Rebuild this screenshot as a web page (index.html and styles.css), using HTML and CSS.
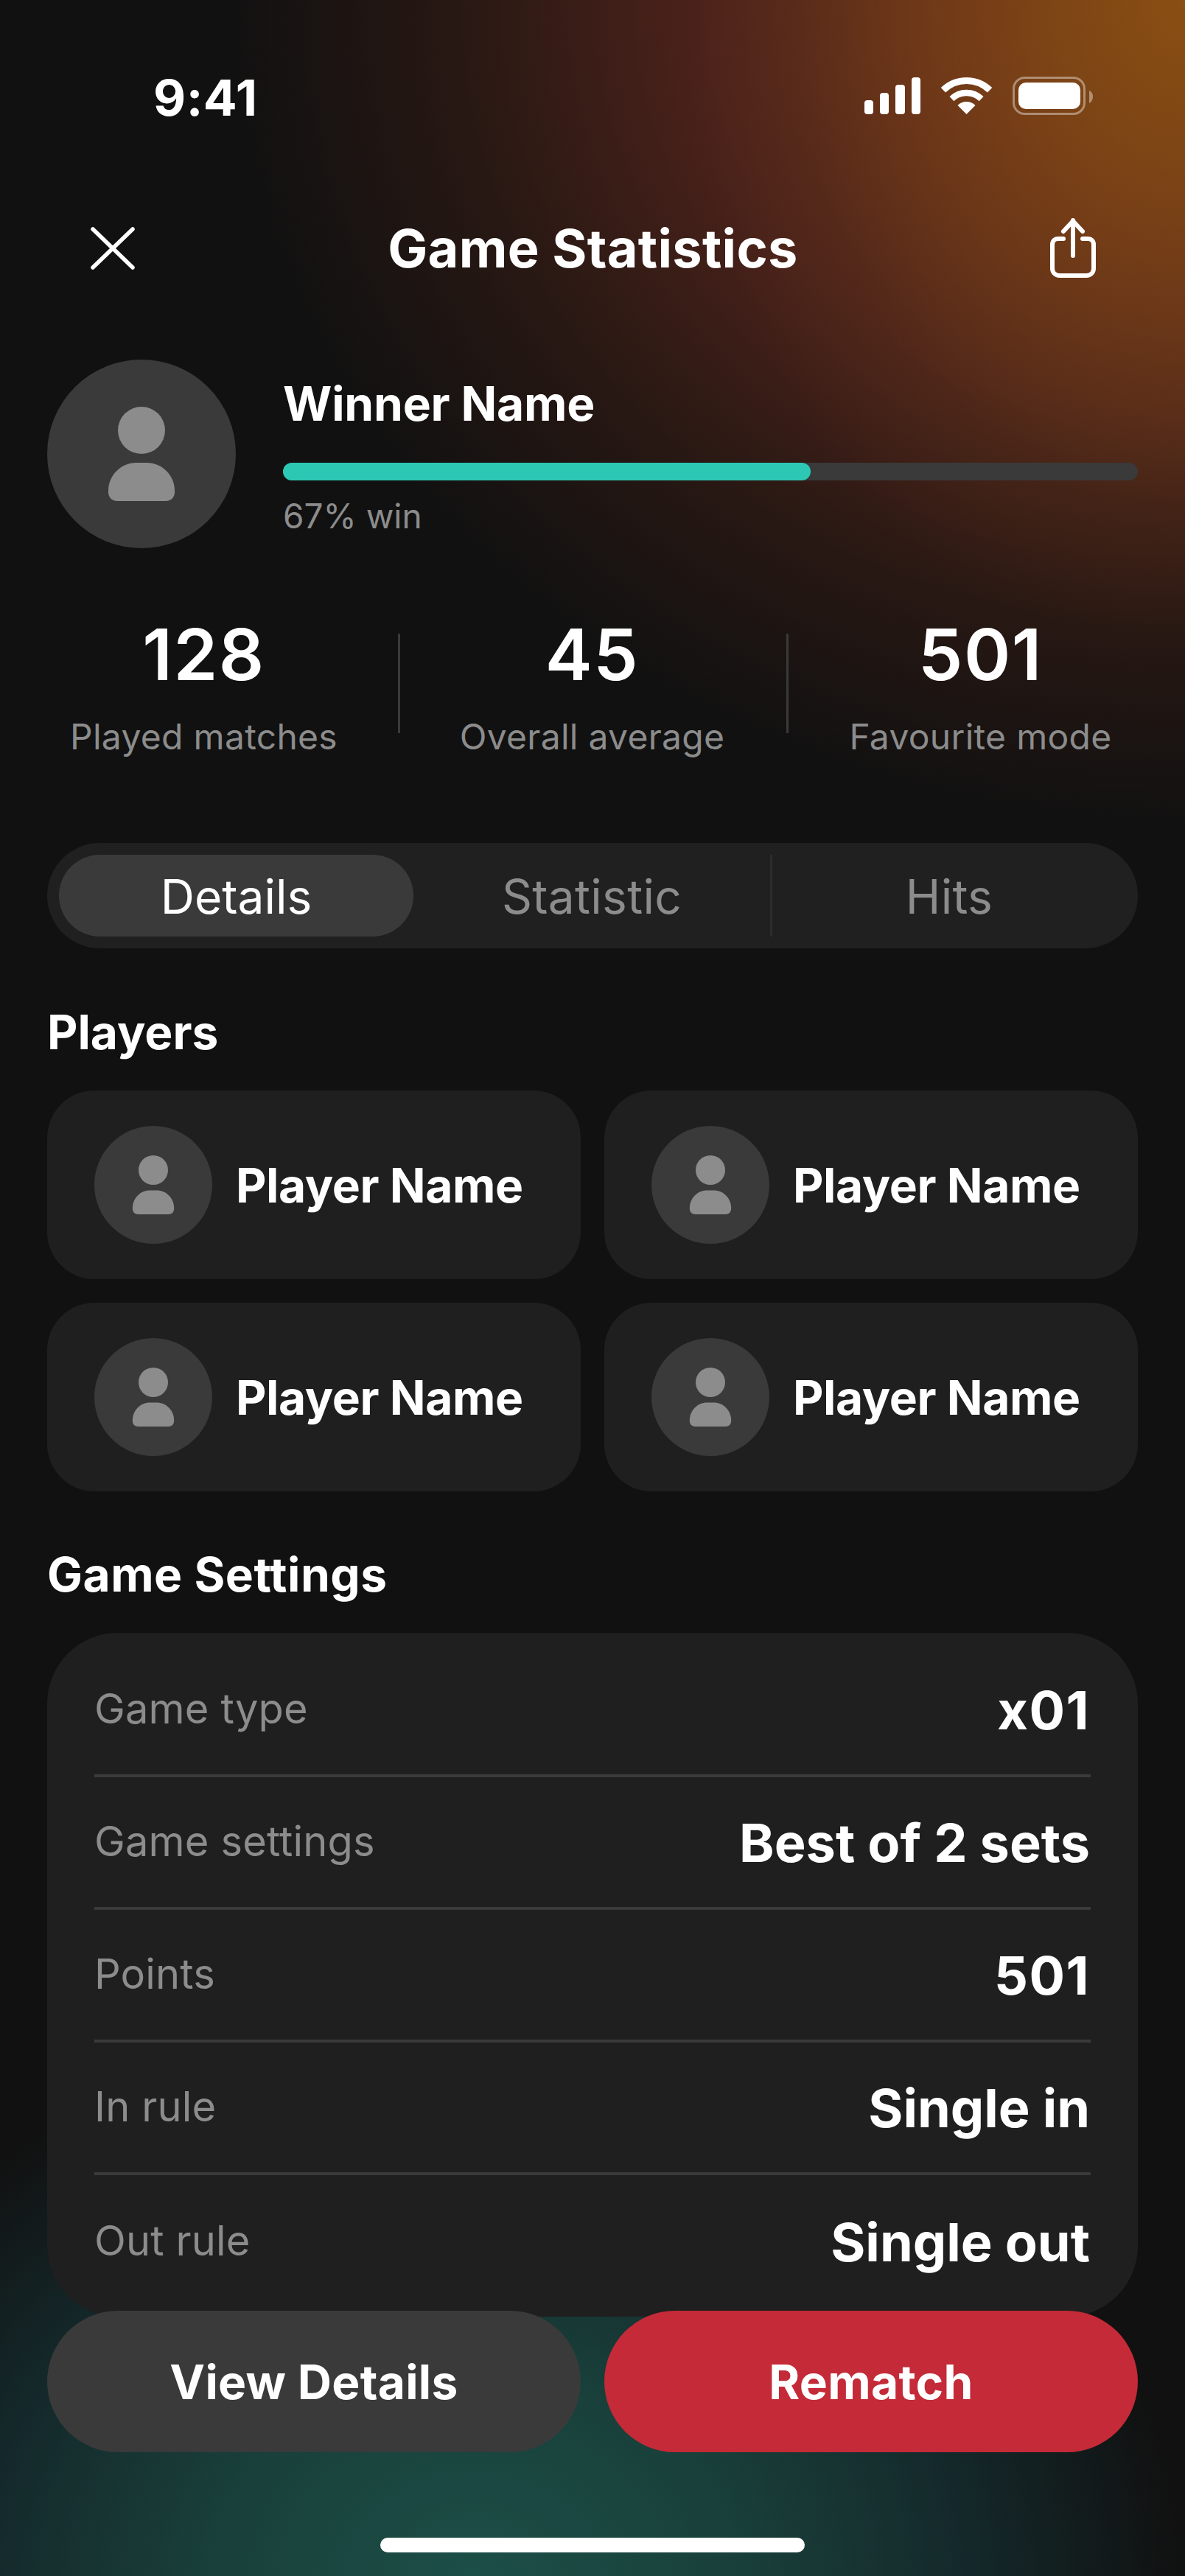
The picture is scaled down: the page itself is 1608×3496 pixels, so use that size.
FILE: index.html
```html
<!DOCTYPE html>
<html lang="en">
<head>
  <meta charset="UTF-8" />
  <meta name="viewport" content="width=device-width, initial-scale=1.0"/>
  <title>Game Statistics</title>
  <link rel="stylesheet" href="styles.css">
</head>
<body>
  <svg class="defs" width="0" height="0">
    <symbol id="person" viewBox="0 0 256 256">
      <circle cx="128" cy="96" r="32" fill="#8c8c8c"/>
      <path d="M121 140h14c21 0 38 17 38 38v2c0 7-5 12-12 12H95c-7 0-12-5-12-12v-2c0-21 17-38 38-38z" fill="#8c8c8c"/>
    </symbol>
  </svg>

  <div class="screen">
    <div class="status">
      <span class="time">9:41</span>
      <svg class="status-icons" width="310" height="56" viewBox="0 0 310 56">
        <rect x="0" y="34" width="12" height="19" rx="4" fill="#fff"/>
        <rect x="21" y="24" width="12" height="29" rx="4" fill="#fff"/>
        <rect x="42" y="13" width="13" height="40" rx="4" fill="#fff"/>
        <rect x="64" y="3" width="12" height="50" rx="4" fill="#fff"/>
        <path d="M106.9 20.3A45.5 45.5 0 0 1 170.1 20.3" fill="none" stroke="#fff" stroke-width="9"/>
        <path d="M118.4 32.1A29 29 0 0 1 158.6 32.1" fill="none" stroke="#fff" stroke-width="8.5"/>
        <path d="M138.5 53L126.5 41A17 17 0 0 1 150.5 41Z" fill="#fff"/>
        <rect x="202.5" y="3.5" width="96" height="49" rx="15" fill="none" stroke="#fff" stroke-opacity="0.4" stroke-width="3"/>
        <rect x="209" y="10" width="84" height="36" rx="10" fill="#fff"/>
        <path d="M305 21c3 1 5 4 5 8s-2 8-5 9z" fill="#fff" fill-opacity="0.4"/>
      </svg>
    </div>

    <div class="nav">
      <svg class="nav-icon" width="64" height="64" viewBox="0 0 64 64">
        <path d="M5 6L59 58M59 6L5 58" fill="none" stroke="#fff" stroke-width="5.5" stroke-linecap="round"/>
      </svg>
      <h1>Game Statistics</h1>
      <svg class="nav-icon" width="64" height="84" viewBox="0 0 64 84">
        <path d="M32 4V52M19 19L32 5L45 19" fill="none" stroke="#fff" stroke-width="6" stroke-linecap="round" stroke-linejoin="round"/>
        <path d="M19 29H12C7 29 4 32 4 37V69C4 75 8 79 14 79H50C56 79 60 75 60 69V37C60 32 57 29 52 29H45" fill="none" stroke="#fff" stroke-width="6" stroke-linecap="round"/>
      </svg>
    </div>

    <div class="hero">
      <svg class="avatar-big" width="256" height="256"><circle cx="128" cy="128" r="128" fill="#3a3a3a"/><use href="#person" width="256" height="256"/></svg>
      <div class="hero-info">
        <div class="winner">Winner Name</div>
        <div class="bar"><div class="bar-fill" style="width: 61.7%"></div></div>
        <div class="win">67% win</div>
      </div>
    </div>

    <div class="stats">
      <div class="stat"><div class="num">128</div><div class="label">Played matches</div></div>
      <div class="stat"><div class="num">45</div><div class="label">Overall average</div></div>
      <div class="stat"><div class="num">501</div><div class="label">Favourite mode</div></div>
    </div>

    <div class="tabs">
      <div class="tab active">Details</div>
      <div class="tab">Statistic</div>
      <div class="tab last">Hits</div>
    </div>

    <h2 class="players-title">Players</h2>
    <div class="players">
      <div class="player"><svg width="160" height="160"><circle cx="80" cy="80" r="80" fill="#3a3a3a"/><use href="#person" width="160" height="160"/></svg><span>Player Name</span></div>
      <div class="player"><svg width="160" height="160"><circle cx="80" cy="80" r="80" fill="#3a3a3a"/><use href="#person" width="160" height="160"/></svg><span>Player Name</span></div>
      <div class="player"><svg width="160" height="160"><circle cx="80" cy="80" r="80" fill="#3a3a3a"/><use href="#person" width="160" height="160"/></svg><span>Player Name</span></div>
      <div class="player"><svg width="160" height="160"><circle cx="80" cy="80" r="80" fill="#3a3a3a"/><use href="#person" width="160" height="160"/></svg><span>Player Name</span></div>
    </div>

    <h2 class="settings-title">Game Settings</h2>
    <div class="settings">
      <div class="row"><span class="key">Game type</span><span class="val digits">x01</span></div>
      <div class="row"><span class="key">Game settings</span><span class="val">Best of 2 sets</span></div>
      <div class="row"><span class="key">Points</span><span class="val digits">501</span></div>
      <div class="row"><span class="key">In rule</span><span class="val">Single in</span></div>
      <div class="row"><span class="key">Out rule</span><span class="val">Single out</span></div>
    </div>

    <div class="footer">
      <div class="actions">
        <div class="btn btn-dark">View Details</div>
        <div class="btn btn-red">Rematch</div>
      </div>
      <div class="home"></div>
    </div>
  </div>
</body>
</html>
```

FILE: styles.css
```css
* {
  box-sizing: border-box;
}

body {
  margin: 0;
  background-color: #111111;
  color: #ffffff;
  font-family: Inter, "Liberation Sans", sans-serif;
}

.defs {
  position: absolute;
}

.screen {
  position: relative;
  width: 1608px;
  height: 3496px;
  padding: 0 64px;
  overflow: hidden;
  background:
    radial-gradient(ellipse 680px 880px at 100% 0, rgba(138,80,18,0.95) 0%, rgba(130,75,20,0.5) 45%, rgba(110,70,20,0.15) 78%, rgba(100,60,20,0) 100%),
    radial-gradient(ellipse 1300px 1120px at 100% 0, #6e3219 0%, #642c1b 25%, #4c221b 50%, #281813 76%, rgba(17,17,17,0) 100%),
    radial-gradient(ellipse 960px 760px at 40% 100%, #1c4f47 0%, #193f3a 38%, #14282a 70%, rgba(17,17,17,0) 100%),
    #111111;
}

/* status bar */
.status {
  height: 232px;
  display: flex;
  justify-content: space-between;
  align-items: flex-start;
  padding: 102px 61px 0 144px;
}

.time {
  margin-top: 2px;
  font-size: 68px;
  font-weight: 700;
  line-height: 56px;
  letter-spacing: 0.5px;
}

/* top nav */
.nav {
  height: 210px;
  display: flex;
  align-items: center;
  justify-content: space-between;
  padding: 0 56px 0 57px;
}

.nav h1 {
  margin: 0;
  font-size: 72px;
  font-weight: 700;
  line-height: 88px;
  letter-spacing: 0.3px;
}

/* winner block */
.hero {
  margin-top: 46px;
  height: 256px;
  display: flex;
  gap: 64px;
}

.hero-info {
  flex: 1;
}

.winner {
  font-size: 64px;
  font-weight: 700;
  line-height: 80px;
  letter-spacing: -0.2px;
  margin-top: 20px;
}

.bar {
  height: 24px;
  margin-top: 40px;
  border-radius: 12px;
  background-color: #3a3a3a;
}

.bar-fill {
  height: 100%;
  border-radius: 12px;
  background-color: #2cc8b4;
}

.win {
  margin-top: 16px;
  color: #8c8c8c;
  font-size: 46px;
  line-height: 64px;
}

/* numbers */
.stats {
  margin: 96px -51px 0;
  display: grid;
  grid-template-columns: repeat(3, 527px);
}

.stat {
  position: relative;
  text-align: center;
}

.stat + .stat::before {
  content: "";
  position: absolute;
  left: 0;
  top: 20px;
  width: 3px;
  height: 135px;
  background-color: #3a3a3a;
}

.num {
  font-size: 96px;
  font-weight: 600;
  line-height: 96px;
  letter-spacing: 1.5px;
}

.label {
  margin-top: 32px;
  color: #8c8c8c;
  font-size: 48px;
  line-height: 64px;
  letter-spacing: 0.3px;
}

/* tabs */
.tabs {
  margin-top: 112px;
  height: 143px;
  padding: 16px;
  display: grid;
  grid-template-columns: 481px 484px 1fr;
  border-radius: 72px;
  background-color: #202020;
}

.tab {
  display: flex;
  align-items: center;
  justify-content: center;
  padding-top: 2px;
  color: #8c8c8c;
  font-size: 64px;
  letter-spacing: 0.3px;
  border-radius: 56px;
}

.tab.active {
  color: #ffffff;
  background-color: #3a3a3a;
  letter-spacing: 0;
}

.tab.last {
  border-left: 3px solid #2c2c2c;
  border-radius: 0;
}

h2 {
  margin: 0;
  font-size: 64px;
  font-weight: 700;
  line-height: 80px;
}

.players-title {
  margin-top: 74px;
  margin-bottom: -1px;
}

/* players */
.players {
  margin-top: 40px;
  display: grid;
  grid-template-columns: 1fr 1fr;
  gap: 32px;
}

.player {
  height: 256px;
  padding: 0 64px;
  display: flex;
  align-items: center;
  gap: 32px;
  border-radius: 64px;
  background-color: #1f1f1f;
  font-size: 64px;
  font-weight: 700;
  letter-spacing: -0.4px;
}

.settings-title {
  margin-top: 73px;
  letter-spacing: 0.5px;
}

/* settings */
.settings {
  margin-top: 39px;
  height: 928px;
  padding: 16px 64px;
  border-radius: 96px;
  background-color: #1f1f1f;
}

.row {
  height: 180px;
  display: flex;
  align-items: center;
  justify-content: space-between;
  border-bottom: 4px solid #3a3a3a;
}

.row:last-child {
  border-bottom: none;
}

.key {
  margin-top: -2px;
  color: #8c8c8c;
  font-size: 56px;
  letter-spacing: 0.15px;
}

.val {
  margin-right: 1px;
  font-size: 72px;
  font-weight: 700;
}

.val.digits {
  letter-spacing: 1.5px;
}

/* sits over the bottom of the settings card */
.footer {
  position: absolute;
  left: 64px;
  right: 64px;
  bottom: 32px;
}

.actions {
  display: grid;
  grid-template-columns: 1fr 1fr;
  gap: 32px;
}

.btn {
  height: 192px;
  display: flex;
  align-items: center;
  justify-content: center;
  border-radius: 96px;
  font-size: 64px;
  font-weight: 700;
  letter-spacing: 0.3px;
}

.btn-dark {
  background-color: #3a3a3a;
}

.btn-red {
  background-color: #c42a38;
}

.home {
  width: 576px;
  height: 20px;
  margin: 116px auto 0;
  border-radius: 10px;
  background-color: #ffffff;
}
```
